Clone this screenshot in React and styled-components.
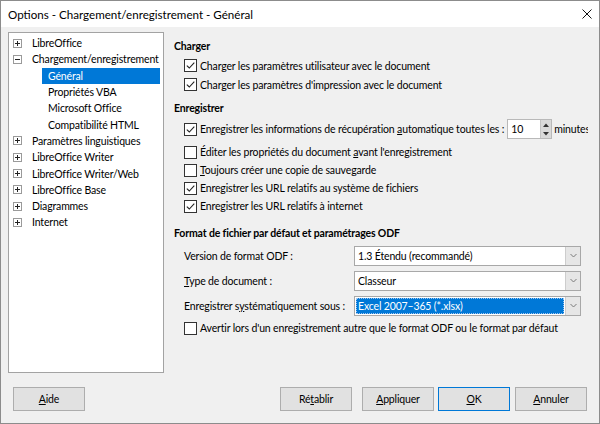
import React from 'react';
import styled, { createGlobalStyle } from 'styled-components';

const GlobalStyle = createGlobalStyle`
    html, body {
        margin: 0;
        padding: 0;
        background: #f0f0f0;
    }

    body {
        font-family: Lato, "Liberation Sans", sans-serif;
        font-size: 10.5px;
        letter-spacing: -0.15px;
        color: #000;
    }
`;

const Window = styled.div`
    display: flex;
    flex-direction: column;
    width: 600px;
    height: 424px;
    box-sizing: border-box;
    overflow: hidden;
    background: #f0f0f0;
    border: 1px solid #8c8c8c;
`;

const TitleBar = styled.div`
    display: flex;
    flex: none;
    align-items: center;
    justify-content: space-between;
    height: 26px;
    padding: 0 7px 0 7px;
    background: #fff;
    font-size: 11.6px;
    letter-spacing: 0;
`;

const Body = styled.div`
    display: flex;
    flex: none;
    height: 341px;
    padding: 5px 7px 0 7px;
`;

const Tree = styled.div`
    flex: none;
    width: 156px;
    box-sizing: border-box;
    padding-top: 2px;
    background: #fff;
    border: 1px solid #a3a3a3;
`;

const TreeRow = styled.div`
    display: flex;
    align-items: center;
    height: 16.3px;
    padding-left: ${({ $child }) => ($child ? '33px' : '4px')};
    padding-right: 3px;
    white-space: nowrap;
`;

const Expander = styled.span`
    position: relative;
    flex: none;
    width: 9px;
    height: 9px;
    box-sizing: border-box;
    margin-right: 10px;
    border: 1px solid #9a9a9a;

    &::before,
    &::after {
        position: absolute;
        background: #222;
        content: '';
    }

    &::before {
        top: 3px;
        left: 1px;
        width: 5px;
        height: 1px;
    }

    &::after {
        display: ${({ $open }) => ($open ? 'none' : 'block')};
        top: 1px;
        left: 3px;
        width: 1px;
        height: 5px;
    }
`;

const TreeLabel = styled.span`
    flex: ${({ $selected }) => ($selected ? 1 : 'none')};
    line-height: 16px;
    padding: 0 6px;
    margin-left: ${({ $child }) => ($child ? '0' : '-6px')};
    background: ${({ $selected }) => ($selected ? '#0078d7' : 'transparent')};
    color: ${({ $selected }) => ($selected ? '#fff' : '#000')};
`;

const Content = styled.div`
    flex: 1;
    min-width: 0;
    margin-right: 4px;
    padding: 6px 0 0 10px;
    overflow: hidden;
`;

const Heading = styled.div`
    height: 16px;
    margin-top: ${({ $gap }) => $gap || 0}px;
    margin-bottom: 2px;
    font-weight: bold;
    line-height: 16px;
`;

const Row = styled.div`
    display: flex;
    align-items: center;
    height: ${({ $h }) => $h || 18}px;
    margin-top: ${({ $gap }) => $gap || 0}px;
    margin-left: 10px;
    white-space: nowrap;
`;

const Box = styled.span`
    display: inline-flex;
    flex: none;
    align-items: center;
    justify-content: center;
    width: 13px;
    height: 13px;
    box-sizing: border-box;
    margin-right: 3px;
    background: #fff;
    border: 1px solid #333;
`;

const Key = styled.span`
    text-decoration: underline;
`;

const SpinBox = styled.div`
    display: flex;
    flex: none;
    width: 45px;
    height: 20px;
    box-sizing: border-box;
    margin-left: 3px;
    background: #fff;
    border: 1px solid #b9b9b9;
`;

const SpinValue = styled.span`
    flex: 1;
    padding-left: 3px;
    line-height: 18px;
`;

const SpinButtons = styled.div`
    display: flex;
    flex: none;
    flex-direction: column;
    width: 10px;
    background: #dadada;
    border-left: 1px solid #c4c4c4;
`;

const SpinArrow = styled.span`
    display: flex;
    flex: 1;
    align-items: center;
    justify-content: center;
`;

const Unit = styled.span`
    margin-left: 2px;
`;

const FieldLabel = styled.span`
    flex: none;
    width: 170px;
`;

const Combo = styled.div`
    display: flex;
    flex: none;
    width: 227px;
    height: 20px;
    box-sizing: border-box;
    background: #fff;
    border: 1px solid #a8a8a8;
`;

const ComboValue = styled.span`
    flex: 1;
    margin: 1px;
    padding-left: 2px;
    line-height: 16px;
    background: ${({ $selected }) => ($selected ? '#0078d7' : 'transparent')};
    color: ${({ $selected }) => ($selected ? '#fff' : '#000')};
    outline: ${({ $selected }) => ($selected ? '1px dotted #9fc5ef' : 'none')};
    outline-offset: -1px;
`;

const ComboButton = styled.span`
    display: flex;
    flex: none;
    align-items: center;
    justify-content: center;
    width: 14px;
    background: #e6e6e6;
    border-left: 1px solid #cdcdcd;
`;

const Footer = styled.div`
    display: flex;
    flex: none;
    align-items: center;
    padding: 14px 12px 0 12px;
`;

const Spacer = styled.div`
    flex: 1;
`;

const Button = styled.div`
    display: flex;
    flex: none;
    align-items: center;
    justify-content: center;
    width: 72px;
    height: 24px;
    box-sizing: border-box;
    margin-left: ${({ $gap }) => $gap || 0}px;
    background: #e1e1e1;
    border: 1px solid ${({ $default }) => ($default ? '#0078d7' : '#adadad')};
`;

const treeItems = [
    { text: 'LibreOffice' },
    { text: 'Chargement/enregistrement', open: true },
    { text: 'Général', child: true, selected: true },
    { text: 'Propriétés VBA', child: true },
    { text: 'Microsoft Office', child: true },
    { text: 'Compatibilité HTML', child: true },
    { text: 'Paramètres linguistiques' },
    { text: 'LibreOffice Writer' },
    { text: 'LibreOffice Writer/Web' },
    { text: 'LibreOffice Base' },
    { text: 'Diagrammes' },
    { text: 'Internet' },
];

function CloseIcon() {
    return (
        <svg width="10" height="10" viewBox="0 0 10 10">
            <path d="M0.5 0.5 L9.5 9.5 M9.5 0.5 L0.5 9.5" stroke="#111" strokeWidth="1" />
        </svg>
    );
}

function Checkbox({ checked }) {
    return (
        <Box>
            {checked && (
                <svg width="11" height="11" viewBox="0 0 11 11">
                    <path d="M1.8 5.6 L4.3 8 L9.3 2.6" fill="none" stroke="#222" strokeWidth="1.1" />
                </svg>
            )}
        </Box>
    );
}

function Chevron() {
    return (
        <svg width="7" height="5" viewBox="0 0 7 5">
            <path d="M0.5 1 L3.5 4 L6.5 1" fill="none" stroke="#7a7a7a" strokeWidth="1" />
        </svg>
    );
}

function CheckRow({ checked, children, ...rest }) {
    return (
        <Row {...rest}>
            <Checkbox checked={checked} />
            <span>{children}</span>
        </Row>
    );
}

function ComboRow({ label, value, selected }) {
    return (
        <Row $h={25}>
            <FieldLabel>{label}</FieldLabel>
            <Combo>
                <ComboValue $selected={selected}>{value}</ComboValue>
                <ComboButton>
                    <Chevron />
                </ComboButton>
            </Combo>
        </Row>
    );
}

export default function App() {
    return (
        <>
            <GlobalStyle />
            <Window>
                <TitleBar>
                    <span>Options - Chargement/enregistrement - Général</span>
                    <CloseIcon />
                </TitleBar>
                <Body>
                    <Tree>
                        {treeItems.map((item) => (
                            <TreeRow key={item.text} $child={item.child}>
                                {!item.child && <Expander $open={item.open} />}
                                <TreeLabel $child={item.child} $selected={item.selected}>
                                    {item.text}
                                </TreeLabel>
                            </TreeRow>
                        ))}
                    </Tree>
                    <Content>
                        <Heading>Charger</Heading>
                        <CheckRow checked $h={19}>
                            Charger les paramètres utilisateur avec le document
                        </CheckRow>
                        <CheckRow checked $h={19}>
                            Charger les paramètres d'impression avec le document
                        </CheckRow>

                        <Heading $gap={6}>Enregistrer</Heading>
                        <Row $h={22}>
                            <Checkbox checked />
                            <span>
                                Enregistrer les informations de récupération <Key>a</Key>utomatique toutes les :
                            </span>
                            <SpinBox>
                                <SpinValue>10</SpinValue>
                                <SpinButtons>
                                    <SpinArrow>
                                        <svg width="6" height="4" viewBox="0 0 6 4">
                                            <path d="M0 4 L3 0.5 L6 4 Z" fill="#333" />
                                        </svg>
                                    </SpinArrow>
                                    <SpinArrow>
                                        <svg width="6" height="4" viewBox="0 0 6 4">
                                            <path d="M0 0 L3 3.5 L6 0 Z" fill="#333" />
                                        </svg>
                                    </SpinArrow>
                                </SpinButtons>
                            </SpinBox>
                            <Unit>minutes</Unit>
                        </Row>
                        <CheckRow $gap={3}>
                            Éditer les propriétés du document <Key>a</Key>vant l'enregistrement
                        </CheckRow>
                        <CheckRow>
                            <Key>T</Key>oujours créer une copie de sauvegarde
                        </CheckRow>
                        <CheckRow checked>Enregistrer les URL relatifs au système de fichiers</CheckRow>
                        <CheckRow checked>Enregistrer les URL relatifs à internet</CheckRow>

                        <Heading $gap={10}>Format de fichier par défaut et paramétrages ODF</Heading>
                        <ComboRow label="Version de format ODF :" value="1.3 Étendu (recommandé)" />
                        <ComboRow
                            label={
                                <>
                                    <Key>T</Key>ype de document :
                                </>
                            }
                            value="Classeur"
                        />
                        <ComboRow
                            label={
                                <>
                                    Enregistrer s<Key>y</Key>stématiquement sous :
                                </>
                            }
                            value="Excel 2007–365 (*.xlsx)"
                            selected
                        />
                        <CheckRow $gap={1}>
                            Avertir lors d'un enregistrement autre que le format ODF ou le format par défaut
                        </CheckRow>
                    </Content>
                </Body>
                <Footer>
                    <Button>
                        <span>
                            <Key>A</Key>ide
                        </span>
                    </Button>
                    <Spacer />
                    <Button>
                        <span>
                            Ré<Key>t</Key>ablir
                        </span>
                    </Button>
                    <Button $gap={10}>
                        <span>
                            <Key>A</Key>ppliquer
                        </span>
                    </Button>
                    <Button $gap={4} $default>
                        <span>
                            <Key>O</Key>K
                        </span>
                    </Button>
                    <Button $gap={5}>
                        <span>
                            <Key>A</Key>nnuler
                        </span>
                    </Button>
                </Footer>
            </Window>
        </>
    );
}
